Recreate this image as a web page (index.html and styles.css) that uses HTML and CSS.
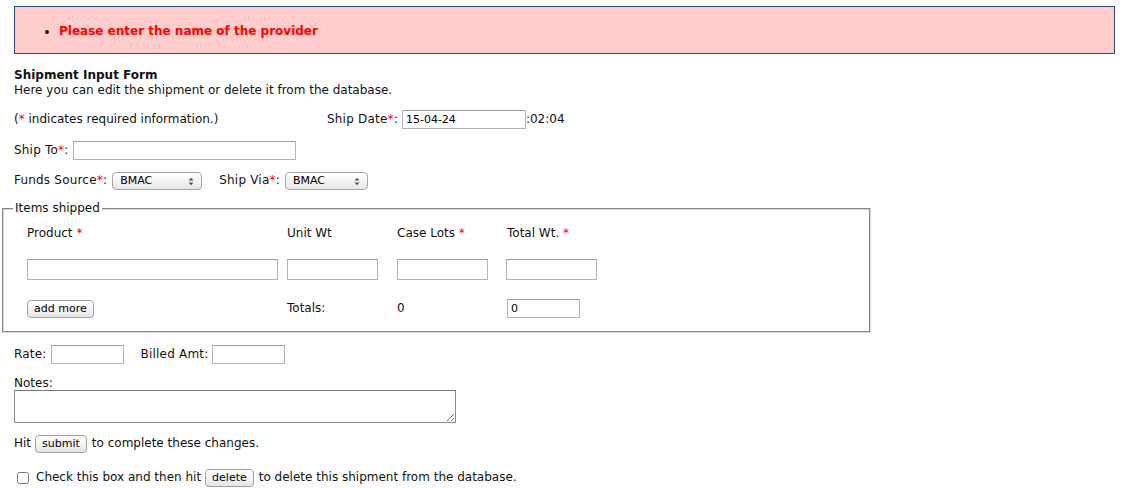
FILE: index.html
```html
<!DOCTYPE html>
<html>
<head>
<meta charset="utf-8">
<title>Shipment Input Form</title>
<link rel="stylesheet" href="styles.css">
</head>
<body>
<div class="page">
  <div class="errors">
    <ul class="error-list">
      <li>Please enter the name of the provider</li>
    </ul>
  </div>

  <div class="intro">
    <div class="title">Shipment Input Form</div>
    <div>Here you can edit the shipment or delete it from the database.</div>
  </div>

  <div class="row row-first">
    <div class="req-note">(<span class="req">*</span> indicates required information.)</div>
    <label class="lbl">Ship Date<span class="req">*</span>:</label>
    <input class="txt date" type="text" value="15-04-24">
    <span class="time">:02:04</span>
  </div>

  <div class="row">
    <label class="lbl lbl-wide">Ship To<span class="req">*</span>:</label>
    <input class="txt shipto" type="text">
  </div>

  <div class="row row-selects">
    <label class="lbl lbl-wide">Funds Source<span class="req">*</span>:</label>
    <div class="sel sel-funds"><span class="sel-text">BMAC</span><svg class="sel-arrows" width="6" height="9" viewBox="0 0 6 9"><path d="M0.5 3.5 L3 0.8 L5.5 3.5 Z M0.5 5.5 L3 8.2 L5.5 5.5 Z" fill="#555"/></svg></div>
    <label class="lbl lbl-wide via">Ship Via<span class="req">*</span>:</label>
    <div class="sel sel-via"><span class="sel-text">BMAC</span><svg class="sel-arrows" width="6" height="9" viewBox="0 0 6 9"><path d="M0.5 3.5 L3 0.8 L5.5 3.5 Z M0.5 5.5 L3 8.2 L5.5 5.5 Z" fill="#555"/></svg></div>
  </div>

  <fieldset class="items">
    <legend>Items shipped</legend>
    <div class="items-grid">
      <div class="hd">Product <span class="req">*</span></div>
      <div class="hd">Unit Wt</div>
      <div class="hd">Case Lots <span class="req">*</span></div>
      <div class="hd">Total Wt. <span class="req">*</span></div>

      <div class="cell"><input class="txt item item-product" type="text"></div>
      <div class="cell"><input class="txt item" type="text"></div>
      <div class="cell"><input class="txt item" type="text"></div>
      <div class="cell"><input class="txt item item-total" type="text"></div>

      <div class="cell"><button class="btn" type="button">add more</button></div>
      <div class="cell">Totals:</div>
      <div class="cell">0</div>
      <div class="cell"><input class="txt sum" type="text" value="0"></div>
    </div>
  </fieldset>

  <div class="row row-rate">
    <label class="lbl">Rate:</label>
    <input class="txt small" type="text">
    <label class="lbl billed">Billed Amt:</label>
    <input class="txt small" type="text">
  </div>

  <div class="notes-label">Notes:</div>
  <textarea class="notes"></textarea>

  <div class="row row-submit">
    <span>Hit</span>
    <button class="btn btn-inline" type="button">submit</button>
    <span>to complete these changes.</span>
  </div>

  <div class="row row-delete">
    <input class="chk" type="checkbox">
    <span>Check this box and then hit</span>
    <button class="btn btn-inline" type="button">delete</button>
    <span>to delete this shipment from the database.</span>
  </div>
</div>
</body>
</html>
```

FILE: styles.css
```css
html, body {
  margin: 0;
  padding: 0;
  background: #fff;
}

body {
  font-family: "DejaVu Sans", Verdana, sans-serif;
  font-size: 12px;
  line-height: 15px;
  color: #111;
}

.page {
  padding: 6px 0 0 14px;
  width: 1101px;
}

.errors {
  box-sizing: border-box;
  height: 48px;
  width: 1101px;
  background: #ffcccc;
  border: 1px solid #2b4a80;
  display: flex;
  align-items: center;
  padding-top: 2px;
}

.error-list {
  margin: 0;
  padding: 0 0 0 44px;
  color: #f00;
  font-weight: bold;
  font-size: 12px;
}

.error-list li::marker {
  color: #111;
}

.intro {
  margin-top: 14px;
}

.title {
  font-weight: bold;
}

.row {
  display: flex;
  align-items: center;
  height: 19px;
  margin-top: 12px;
  white-space: nowrap;
}

.row-first {
  margin-top: 12px;
}

.row-selects {
  margin-top: 11px;
}

.req-note {
  width: 313px;
}

.req {
  color: #f00;
}

.lbl {
  margin-right: 4px;
  letter-spacing: 0.2px;
}

.lbl-wide {
  margin-right: 5px;
}

.txt {
  box-sizing: border-box;
  font-family: "DejaVu Sans", Verdana, sans-serif;
  font-size: 11px;
  color: #000;
  border: 1px solid #b3b3b3;
  border-top-color: #a0a0a0;
  background: #fff;
  padding: 1px 3px;
  margin: 0;
  height: 19px;
  outline: none;
}

.date {
  width: 124px;
}

.shipto {
  width: 223px;
}

.sel {
  position: relative;
  box-sizing: border-box;
  width: 90px;
  height: 18px;
  border: 1px solid #a6a6a6;
  border-radius: 4px;
  background: linear-gradient(#ffffff, #f1f1f1 60%, #e6e6e6);
  display: flex;
  align-items: center;
  font-size: 11px;
  padding-left: 7px;
  color: #000;
}

.sel-via {
  width: 83px;
}

.sel-arrows {
  position: absolute;
  right: 7px;
  top: 4px;
}

.via {
  margin-left: 17px;
}

.items {
  margin: 11px 0 0 -12px;
  width: 869px;
  box-sizing: border-box;
  border: 2px groove #d8d8d8;
  padding: 10px 0 14px 9px;
}

.items legend {
  padding: 0 2px;
  line-height: 15px;
}

.items-grid {
  display: grid;
  grid-template-columns: 260px 110px 110px 110px;
  grid-template-rows: 15px 21px 19px;
  row-gap: 18px;
  margin-left: 14px;
  align-items: center;
}

.items-grid .cell:nth-child(n+9) {
  margin-top: 2px;
}

.item {
  height: 21px;
  width: 91px;
}

.item-product {
  width: 251px;
}

.item-total {
  margin-left: -1px;
}

.sum {
  width: 73px;
  height: 19px;
}

.btn {
  box-sizing: border-box;
  font-family: "DejaVu Sans", Verdana, sans-serif;
  font-size: 11px;
  line-height: 14px;
  height: 18px;
  padding: 0 6px;
  border: 1px solid #a0a0a0;
  border-radius: 4px;
  background: linear-gradient(#ffffff, #f3f3f3 55%, #e4e4e4);
  color: #000;
  margin: 0;
}

.row-rate {
  margin-top: 12px;
}

.small {
  width: 73px;
}

.billed {
  margin-left: 17px;
}

.notes-label {
  margin-top: 12px;
}

.notes {
  display: block;
  box-sizing: border-box;
  width: 442px;
  height: 33px;
  margin: -1px 0 0 0;
  border: 1px solid #8a8a8a;
  border-top-color: #777;
  resize: both;
  font-family: "DejaVu Sans", Verdana, sans-serif;
  font-size: 11px;
}

.row-submit {
  margin-top: 11px;
}

.btn-inline {
  margin: 0 5px 0 4px;
}

.row-delete {
  margin-top: 15px;
}

.chk {
  margin: 0 7px 0 3px;
  width: 12px;
  height: 12px;
}
```
